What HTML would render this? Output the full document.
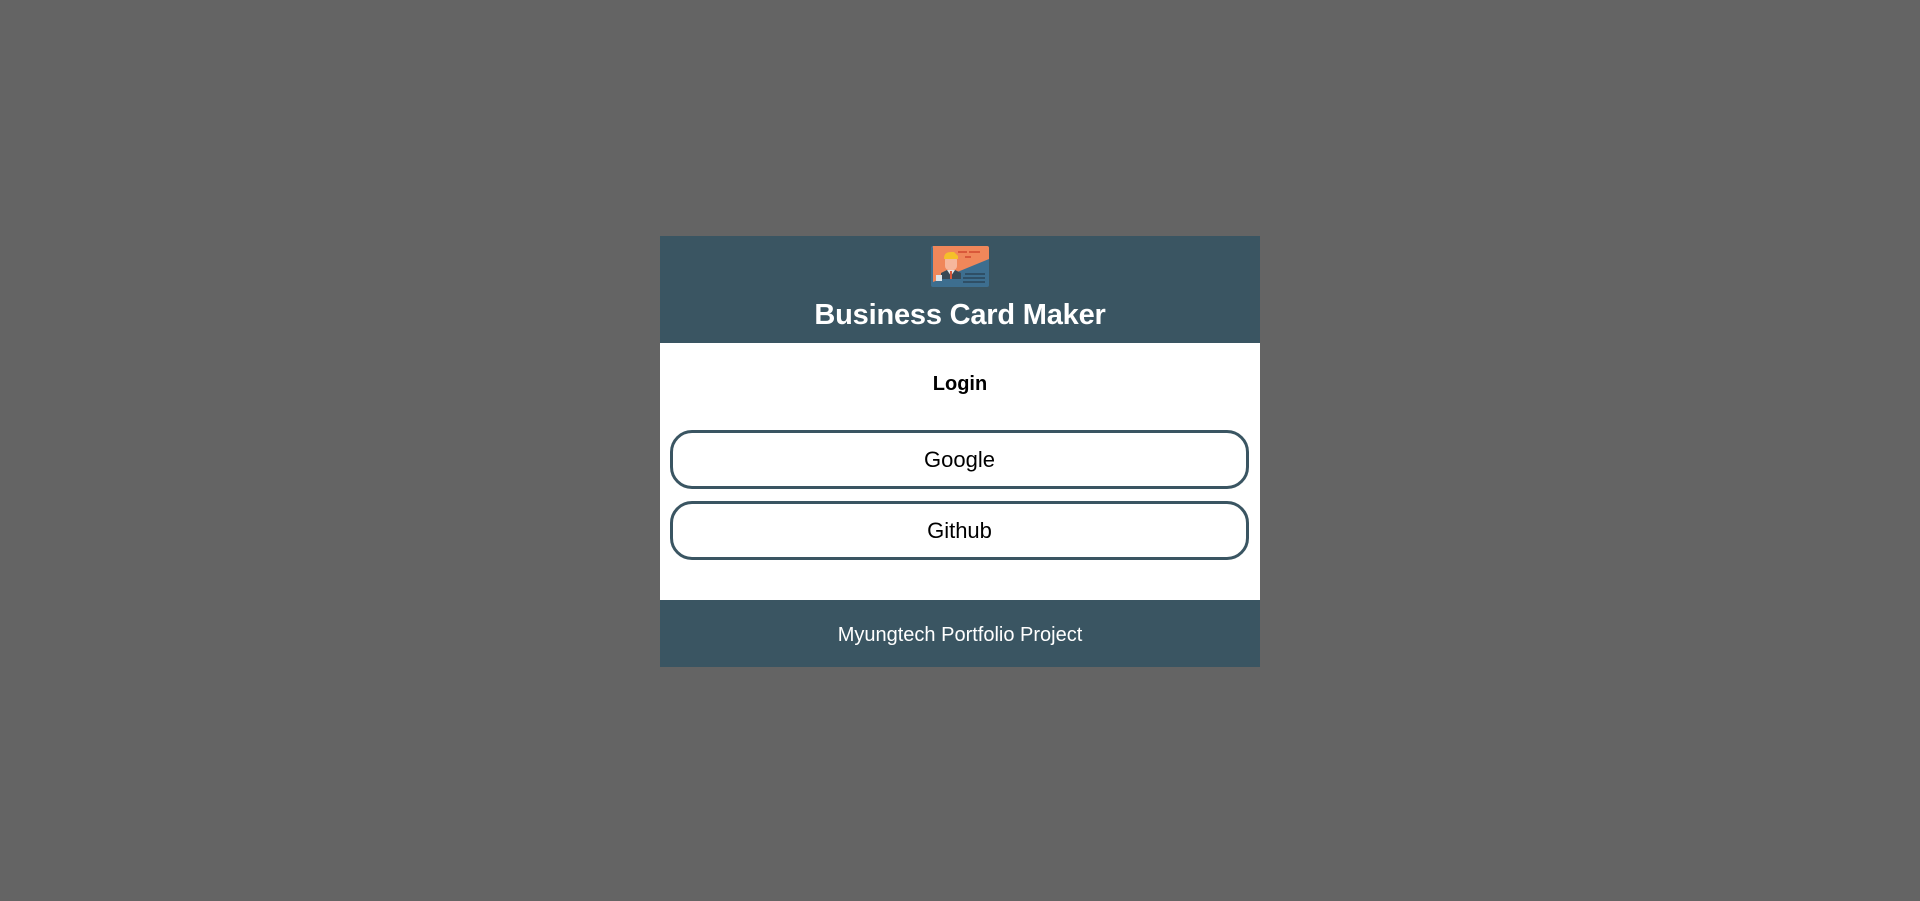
<!DOCTYPE html>
<html><head><style>
html,body{margin:0;padding:0;width:1920px;height:901px;background:#646464;overflow:hidden}
.card{position:absolute;left:660px;top:236px;width:600px;height:431px;background:#fff;font-family:"Liberation Sans",sans-serif}
.hdr{height:107px;background:#3a5562;position:relative}
.logo{position:absolute;left:271px;top:10px}
.title{position:absolute;left:0;right:0;top:63px;text-align:center;color:#fff;font-weight:bold;font-size:29px;letter-spacing:-0.2px}
.login{position:absolute;left:0;right:0;top:137px;text-align:center;font-weight:bold;font-size:20px}
.btn{position:absolute;left:10px;width:573px;height:53px;border:3px solid #3a5562;border-radius:22px;text-align:center;line-height:53px;font-size:22px;color:#000}
.ftr{position:absolute;left:0;right:0;bottom:0;height:67px;background:#3a5562;color:#fff;text-align:center;line-height:70px;font-size:20px}
</style></head><body>
<div class="card">
 <div class="hdr">
  <svg class="logo" width="58" height="41" viewBox="0 0 58 41">
   <rect x="0" y="0" width="58" height="41" rx="2" fill="#3d6e8f"/>
   <path d="M2 0H56a2 2 0 0 1 2 2V13L2 36V2a2 2 0 0 1 0-2z" fill="#f0875a"/>
   <rect x="27" y="5" width="9" height="2" fill="#d9583a"/><rect x="38" y="5" width="11" height="2" fill="#d9583a"/><rect x="34" y="10" width="6" height="2" fill="#d9583a"/>
   <path d="M10 33V27l6-3h8l6 3v6z" fill="#394a56"/>
   <path d="M16 24h8l-4 6z" fill="#e6e6e6"/><rect x="19" y="25" width="2" height="8" fill="#d9583a"/>
   <rect x="14" y="10" width="12" height="14" rx="4" fill="#f6b79c"/>
   <path d="M13 12q0-6 7-6h3l4 4v3h-14z" fill="#f5c02a"/>
   <rect x="5" y="29" width="6" height="6" fill="#dde4ea"/>
   <rect x="34" y="27" width="20" height="2" fill="#2f4f66"/><rect x="32" y="31" width="22" height="2" fill="#2f4f66"/><rect x="32" y="35" width="22" height="2" fill="#2f4f66"/>
  </svg>
  <div class="title">Business Card Maker</div>
 </div>
 <div class="login">Login</div>
 <div class="btn" style="top:194px">Google</div>
 <div class="btn" style="top:265px">Github</div>
 <div class="ftr">Myungtech Portfolio Project</div>
</div>
</body></html>
